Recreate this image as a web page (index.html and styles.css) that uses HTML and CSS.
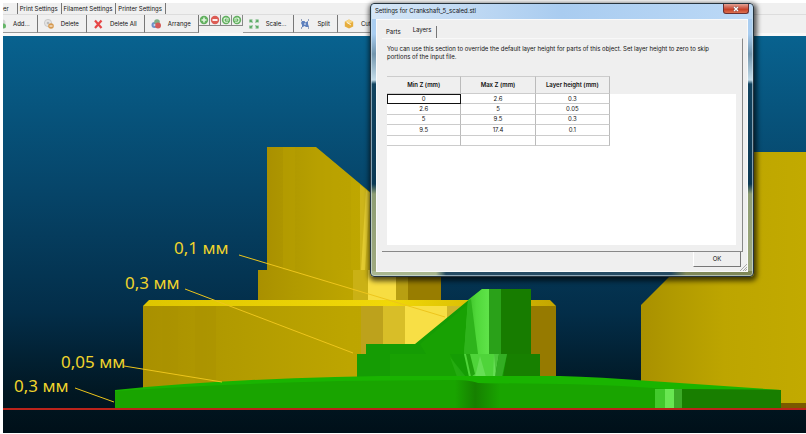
FILE: index.html
```html
<!DOCTYPE html>
<html lang="en">
<head>
<meta charset="utf-8">
<title>Settings for Crankshaft_5_scaled.stl</title>
<link rel="stylesheet" href="styles.css">
</head>
<body>
<div class="app">
  <nav class="tabs">
    <a href="#plater">er</a><a href="#print">Print Settings</a><a href="#filament">Filament Settings</a><a href="#printer">Printer Settings</a>
  </nav>
  <div class="toolbar">
    <button class="tool tool-cut-off"><svg class="icon" viewBox="0 0 10 10"><circle cx="6" cy="4" r="3.5" fill="#d4d4d4"/><circle cx="7.500" cy="7" r="2.500" fill="#65b568"/></svg>Add...</button>
    <button class="tool"><svg class="icon" viewBox="0 0 10 10"><circle cx="4" cy="4" r="3.600" fill="#e4e4e4" stroke="#b5b5b5" stroke-width=".6"/><circle cx="4" cy="4" r="1.300" fill="#bbb"/><circle cx="7" cy="7" r="2.800" fill="#d69a50"/><path d="M5.500 7h3" stroke="#fff"/></svg>Delete</button>
    <button class="tool"><svg class="icon" viewBox="0 0 10 10"><path d="M2 1.500 8.500 9M8.500 1.500 2 9" stroke="#e64646" stroke-width="2.200"/></svg>Delete All</button>
    <button class="tool"><svg class="icon" viewBox="0 0 10 10"><circle cx="3.500" cy="6" r="3" fill="#6e93c8"/><circle cx="6" cy="3" r="2.800" fill="#7fae86"/><circle cx="7" cy="6.500" r="3" fill="#d35c58"/><circle cx="3.500" cy="6" r="1" fill="#cddcf0"/></svg>Arrange</button>
    <button class="mini" aria-label="Add copy"><svg class="icon" viewBox="0 0 10 10"><circle cx="5" cy="5" r="4.200" fill="#62b060"/><path d="M5 2.500v5M2.500 5h5" stroke="#e3f7df" stroke-width="1.600"/></svg></button>
    <button class="mini" aria-label="Remove copy"><svg class="icon" viewBox="0 0 10 10"><circle cx="5" cy="5" r="4.200" fill="#dc5c54"/><path d="M2.500 5h5" stroke="#fff" stroke-width="1.800"/></svg></button>
    <button class="mini" aria-label="Rotate left"><svg class="icon" viewBox="0 0 10 10"><circle cx="5" cy="5" r="4.200" fill="#62b060"/><path d="M7.500 3.500Q3 2 3 5t4 2M5 5h3" fill="none" stroke="#e3f7df" stroke-width="1.200"/></svg></button>
    <button class="mini" aria-label="Rotate right"><svg class="icon" viewBox="0 0 10 10"><circle cx="5" cy="5" r="4.200" fill="#62b060"/><path d="M2.500 3.500Q7 2 7 5t-4 2M5 5H2" fill="none" stroke="#e3f7df" stroke-width="1.200"/></svg></button>
    <button class="tool"><svg class="icon" viewBox="0 0 10 10"><path d="M1 3.500V1h2.500M1 1l2.500 2.500M9 3.500V1H6.500M9 1 6.500 3.500M1 6.500V9h2.500M1 9l2.500-2.500M9 6.500V9H6.500M9 9 6.500 6.500" fill="none" stroke="#5cab66" stroke-width="1.200"/></svg>Scale...</button>
    <button class="tool"><svg class="icon" viewBox="0 0 10 10"><path d="M2 2h2.500l1 1.500L8 2v3l1 3H6L4.500 7 2 8.500V6L1 4z" fill="#5e80bd"/><path d="M1 1h1M8 1h1M1 9h1M8 9h1" stroke="#34538e" stroke-width="1.200"/><circle cx="5" cy="5" r="1" fill="#bfcfea"/></svg>Split</button>
    <button class="tool"><svg class="icon" viewBox="0 0 10 10"><path d="m5 .5 4.200 2.300v4.600L5 9.500.8 7.400V2.800z" fill="#e6ad3c"/><path d="m5 .5 4.200 2.300L5 5 .8 2.800z" fill="#f7d684"/><path d="M3 3.500 7 6" stroke="#fff" stroke-width=".8"/></svg>Cut...</button>
  </div>

  <main class="preview">
    <svg class="scene" viewBox="3 36 803 397" preserveAspectRatio="xMinYMin slice" role="img" aria-label="Model preview">
      <defs>
        <linearGradient id="sky" x2="0" y2="1"><stop offset="0" stop-color="#08628f"/><stop offset=".4" stop-color="#064468"/><stop offset=".7" stop-color="#032d48"/><stop offset=".9" stop-color="#011722"/><stop offset="1" stop-color="#001019"/></linearGradient>
        <linearGradient id="gold"><stop offset="0" stop-color="#a99000"/><stop offset=".2" stop-color="#b19a00"/><stop offset=".5" stop-color="#bda500"/><stop offset="1" stop-color="#c2aa00"/></linearGradient>
        <linearGradient id="goldTop"><stop offset="0" stop-color="#dec600"/><stop offset=".6" stop-color="#f1d808"/><stop offset="1" stop-color="#c4a600"/></linearGradient>
        <linearGradient id="crease"><stop offset="0" stop-color="#19a400"/><stop offset=".45" stop-color="#168000"/><stop offset="1" stop-color="#19a400"/></linearGradient>
        <linearGradient id="shine"><stop offset="0" stop-color="#35b520"/><stop offset=".5" stop-color="#50d83a"/><stop offset="1" stop-color="#60e44a"/></linearGradient>
      </defs>
      <rect x="3" y="36" width="803" height="397" fill="url(#sky)"/>

      <path d="M267 147h49l91 76v50H267z" fill="url(#gold)"/>
      <path d="M283 147h12v123h-12zM318 149l33 28v93h-33z" fill="#b8a000" opacity=".5"/>
      <path d="m360 185 12 9v76h-12z" fill="#cdb51a"/>
      <path d="m366 190-5 80h4l5-77z" fill="#e3cb30"/>
      <path d="M258 270h183v31H258z" fill="url(#gold)"/>
      <path d="M353 270h15v31h-15z" fill="#cab115"/>
      <path d="M368 270h28v31h-28z" fill="#f7dd42"/>
      <path d="M396 270h12v31h-12z" fill="#b89f12"/>
      <path d="M408 270h33v31h-33z" fill="#987d00"/>

      <path d="M143 306h413v82H143z" fill="url(#gold)"/>
      <path d="M162 306h16v82h-16zM195 306h21v82h-21z" fill="#a99100" opacity=".5"/>
      <path d="M361 306h22v50h-22z" fill="#bda21c"/>
      <path d="M383 306h22v50h-22z" fill="#d8be28"/>
      <path d="M405 306h42v50h-42z" fill="#f8df45"/>
      <path d="M447 306h20v50h-20z" fill="#d0b62a"/>
      <path d="M530 306h26v82h-26z" fill="#967a00"/>
      <path d="m143 306 6-6h401l6 6z" fill="url(#goldTop)"/>

      <path d="m641 305 112-112v-41h53v252H641z" fill="url(#gold)"/>
      <path d="M778 403h28v5h-28z" fill="#795a00"/>

      <path d="M357 380v-26h9v-10h49l67-55h49v65h9v26z" fill="#159c04"/>
      <path d="m420 344 48-40-4 50h-38zM390 354h60l12 23h-72z" fill="#18a103"/>
      <path d="m468 300 14-11h7v65h-25z" fill="url(#shine)"/>
      <path d="m468 301 3-2 7 55h-14z" fill="#2eb41b"/>
      <path d="M489 289h12v65h-12z" fill="#2aa119"/>
      <path d="M501 289h30v65h-30z" fill="#177c00"/>
      <path d="M464 354h30l2 23h-27z" fill="#4fd43a"/>
      <path d="m480 356 6 21h-11zM494 354h5l-4 23h-2z" fill="#7ae86a" opacity=".55"/>
      <path d="m450 357 16 20h-9z" fill="#30b51e" opacity=".5"/>
      <path d="m470 354 5 20-4 3-5-23z" fill="#22a30e"/>
      <path d="M507 354h33v23h-37z" fill="#178000"/>
      <path d="m499 354 8 0-5 23h-7z" fill="#33ad23"/>

      <path d="M115 390q100-10 220-13l45-1h180q40 1 90 5l131 9v18H115z" fill="#19b400"/>
      <path d="M115 391q105-7 225-10l110-1q18 0 28 3l82 1q60 1 105 5l116 1v18H115z" fill="#19a400"/>
      <path d="M455 380q15 0 23 3l22 1v24h-45z" fill="url(#crease)"/>
      <path d="M655 389h10v19h-10z" fill="#42c92c"/>
      <path d="M665 389h9v19h-9z" fill="#69e652"/>
      <path d="M674 389h8v19h-8z" fill="#3caa27"/>
      <path d="M682 389l99 1v18h-99z" fill="#187e00"/>
      <path d="M3 409h803" stroke="#bb231b" stroke-width="2"/>

      <g class="leaders"><path d="m239 255 206 62M185 289l168 64M124 366l98 16M75 388l39 14"/></g>
      <g class="notes">
        <text x="174" y="254">0,1 мм</text>
        <text x="125" y="289">0,3 мм</text>
        <text x="61" y="368">0,05 мм</text>
        <text x="14" y="392">0,3 мм</text>
      </g>
    </svg>
  </main>
</div>

<section class="dialog" role="dialog" aria-labelledby="dialog-title">
  <header class="titlebar">
    <h1 id="dialog-title">Settings for Crankshaft_5_scaled.stl</h1>
    <button class="close" aria-label="Close"><svg viewBox="0 0 8 6"><path d="m2 1 4 4M6 1 2 5" stroke="#6b4545" stroke-width="2.400"/><path d="m2 1 4 4M6 1 2 5" stroke="#fff" stroke-width="1.400"/></svg></button>
  </header>
  <div class="body">
    <div class="pages"><button class="page">Parts</button><button class="page current">Layers</button></div>
    <div class="panel">
      <p>You can use this section to override the default layer height for parts of this object. Set layer height to zero to skip portions of the input file.</p>
      <div class="sheet">
        <table>
          <thead><tr><th>Min Z (mm)</th><th>Max Z (mm)</th><th>Layer height (mm)</th></tr></thead>
          <tbody>
            <tr><td class="selected">0</td><td>2.6</td><td>0.3</td></tr>
            <tr><td>2.6</td><td>5</td><td>0.05</td></tr>
            <tr><td>5</td><td>9.5</td><td>0.3</td></tr>
            <tr><td>9.5</td><td>17.4</td><td>0.1</td></tr>
            <tr><td>&nbsp;</td><td>&nbsp;</td><td>&nbsp;</td></tr>
          </tbody>
        </table>
      </div>
    </div>
    <footer><button class="ok">OK</button></footer>
    <svg class="grip" viewBox="0 0 7 7"><path d="M0 7 7 0M3 7l4-4M5 7l2-2" stroke="#aaa"/></svg>
  </div>
</section>
</body>
</html>
```
FILE: styles.css
```css
* { box-sizing: border-box; }

body {
  margin: 0;
  background: #fff;
  color: #111;
  font: 6px/8px Inter, "Noto Sans", sans-serif;
}

button {
  margin: 0;
  padding: 0;
  border: 0;
  background: none;
  color: inherit;
  font: inherit;
}

svg { display: block; }

.app {
  display: flex;
  flex-direction: column;
  height: 100vh;
  padding: 3px 0 1px 3px;
  overflow: hidden;
}

.tabs {
  display: flex;
  height: 11px;
  background: #f0f0f0;
}

.tabs a {
  padding: 2px 3px 0 2px;
  border-right: 1px solid #777;
  color: inherit;
  text-decoration: none;
  white-space: nowrap;
}

.tabs a:first-child { padding: 2px 8px 0 0; }

.toolbar {
  display: flex;
  align-items: flex-start;
  height: 22px;
  overflow: hidden;
  border-top: 1px solid #ddd;
  border-bottom: 3px solid #f8f8f8;
  background: #f0f0f0;
}

.tool {
  display: flex;
  flex: none;
  align-items: center;
  gap: 7px;
  height: 18px;
  padding: 0 7px 0 6px;
  border-right: 1px solid #777;
  border-bottom: 1px solid #999;
}

.tool-cut-off { margin-left: -13px; }

.icon {
  width: 10px;
  height: 10px;
}

.mini {
  flex: none;
  width: 11px;
  height: 11px;
  border-right: 1px solid #888;
  border-bottom: 1px solid #888;
}

.preview {
  flex: 1;
  min-height: 0;
}

.scene {
  width: 100%;
  height: 100%;
}

.leaders {
  fill: none;
  stroke: #edc51c;
}

.notes {
  fill: #f0d42c;
  font: 17px "Noto Sans", sans-serif;
}

.dialog {
  position: absolute;
  top: 3px;
  left: 370px;
  width: 384px;
  padding: 0 5px 4px;
  border: 1px solid #26343e;
  border-radius: 4px;
  background:
    linear-gradient(90deg, #a9b78f 65px, #254a62 75px 300px, #7f8858 315px) bottom / 100% 5px no-repeat,
    linear-gradient(#a9cdf0 0 30px, #7295ad 50px, #c4dce9 76px, #12435f 80px, #0b3854 180px, #8e9d73 190px, #a0aa80);
  box-shadow: inset 0 0 0 1px rgb(211 229 239 / 60%), 1px 2px 5px 2px rgb(0 0 0 / 65%);
}

.titlebar {
  display: flex;
  justify-content: space-between;
  height: 15px;
  margin: 0 -4px;
  background: linear-gradient(90deg, #d6e6f6, #a9ccf0 50%, #bcd9f6);
  border-radius: 3px 3px 0 0;
}

.titlebar h1 {
  margin: 0;
  padding: 3px 0 0 3px;
  font-size: 6px;
  font-weight: 400;
}

.close {
  display: flex;
  align-items: center;
  justify-content: center;
  width: 26px;
  height: 10px;
  margin-right: 3px;
  border: 1px solid #6b3030;
  border-top: 0;
  border-radius: 0 0 3px 3px;
  background: linear-gradient(#e4a294, #cc513c 50%, #c43c22 55%, #dd7050);
}

.close svg {
  width: 8px;
  height: 6px;
}

.body {
  position: relative;
  padding: 6px 4px 4px 5px;
  border: 1px solid #fafafa;
  background: #efefef;
}

.pages {
  display: flex;
  height: 12px;
}

.page { padding: 0 4px; }

.current {
  height: 12px;
  padding: 0 5px 4px 8px;
  border-right: 1px solid #777;
}

.panel {
  padding: 6px 6px 6px 5px;
  border-top: 1px solid #f8f8f8;
  border-right: 1px solid #888;
  border-bottom: 1px solid #888;
}

.panel p {
  max-width: 336px;
  margin: 0 0 15px;
}

.sheet {
  height: 169px;
  background: linear-gradient(#efefef 18px, #fff 18px);
}

table {
  width: 223px;
  height: 70px;
  border-spacing: 0;
  table-layout: fixed;
  text-align: center;
}

th, td {
  padding: 0;
  border-right: 1px solid #bbb;
  border-bottom: 1px solid #ccc;
  line-height: 8px;
}

th {
  height: 18px;
  border-top: 1px solid #ccc;
  font-weight: 600;
}

.selected {
  outline: 1px solid #111;
  outline-offset: -1px;
}

footer {
  display: flex;
  justify-content: flex-end;
}

.ok {
  width: 48px;
  height: 15px;
  margin-right: 2px;
  border-right: 1px solid #777;
  border-bottom: 1px solid #777;
  border-left: 1px solid #fff;
}

.grip {
  position: absolute;
  right: 0;
  bottom: 0;
  width: 7px;
  height: 7px;
}
```
